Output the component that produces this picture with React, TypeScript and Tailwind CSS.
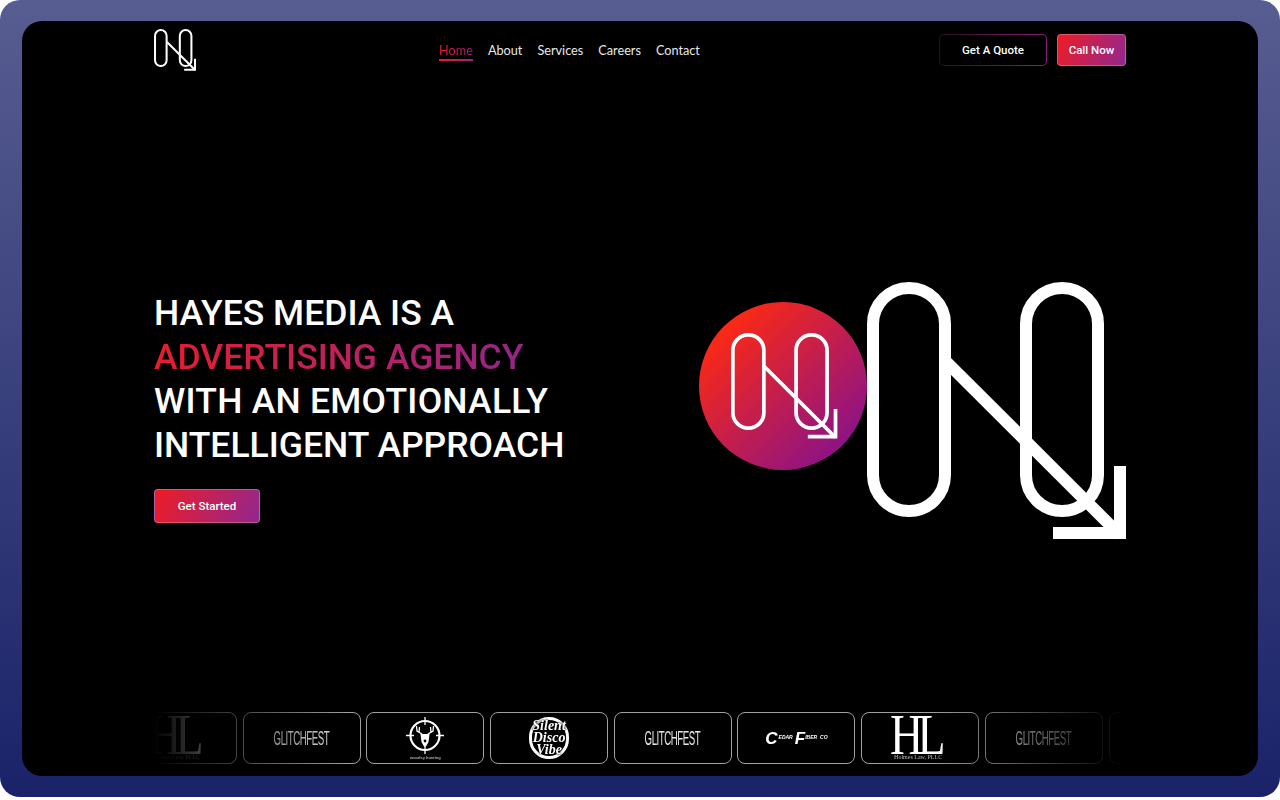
function Logo({ size, stroke, className = '' }: { size: number; stroke: number; className?: string }) {
  const inset = stroke / 2
  return (
    <svg width={size} height={size} viewBox="0 0 259 259" fill="none" stroke="white" strokeWidth={stroke} className={className}>
      <rect x={inset} y={inset} width={84 - stroke} height={235 - stroke} rx={(84 - stroke) / 2} />
      <rect x={153 + inset} y={inset} width={84 - stroke} height={235 - stroke} rx={(84 - stroke) / 2} />
      <path d="M80 80.5 L253 253" />
      <path d="M253 184 V251 H186" />
    </svg>
  )
}

function Glitchfest() {
  return (
    <span className="inline-block scale-x-[0.46] whitespace-nowrap font-['Liberation_Sans'] text-[21px] tracking-[-1px] text-[#e5e5e5]">
      GLITCHFEST
    </span>
  )
}

function Holmes() {
  return (
    <div className="flex flex-col items-center pt-[1px] -translate-x-[2px] text-white font-['Liberation_Serif']">
      <span className="h-[38px] scale-x-[0.82] text-[56px] leading-[38px] tracking-[-7px] pr-[7px]">HL</span>
      <span className="text-[6px] leading-[7px] text-[#bbbbbb]">Holmes Law, PLLC</span>
    </div>
  )
}

function Deer() {
  return (
    <div className="flex flex-col items-center">
      <svg width="38" height="37" viewBox="0 0 38 37" fill="none" stroke="white">
        <circle cx="19" cy="18.5" r="14.5" strokeWidth="2.2" />
        <path d="M19 0V8M19 29V37M0 18.5H8M30 18.5H38" strokeWidth="1.3" />
        <path d="M14.5 17 L23.5 17 L22.5 25 L20 29.5 L18 29.5 L15.5 25 Z" fill="white" stroke="none" />
        <path d="M16 17 L11 14 L10.5 9 M13 15.5 L13.5 10 M22 17 L27 14 L27.5 9 M25 15.5 L24.5 10" strokeWidth="1.3" />
        <circle cx="19" cy="24" r="1.4" fill="black" stroke="none" />
      </svg>
      <span className="mt-[1px] text-[4px] leading-[5px] text-[#aaaaaa] font-['Liberation_Sans'] font-bold">woodsy hunting</span>
    </div>
  )
}

function SilentDisco() {
  return (
    <div className="flex h-[42px] w-[40px] flex-col items-center justify-center rounded-full border-[3px] border-white font-['Liberation_Serif'] text-[14px] font-bold italic leading-[12px] text-white [text-shadow:0_0_2px_#000,0_0_2px_#000]">
      <span>Silent</span>
      <span>Disco</span>
      <span>Vibe</span>
    </div>
  )
}

function Cedar() {
  return (
    <div className="flex items-center italic font-['Liberation_Sans'] font-bold text-white">
      <span className="text-[17px] leading-none mr-[1px]">C</span>
      <span className="text-[5px] mr-[2px]">EDAR</span>
      <span className="text-[17px] leading-none">F</span>
      <span className="text-[5px] mr-[3px]">IBER</span>
      <span className="text-[5px]">CO</span>
    </div>
  )
}

const clients = [Holmes, Glitchfest, Deer, SilentDisco, Glitchfest, Cedar, Holmes, Glitchfest, Deer]

export default function App() {
  return (
    <div className="h-[797px] rounded-[20px] bg-[linear-gradient(180deg,#575d90,#1a2369)] px-[22px] pt-[21px] pb-[21px]">
      <div className="flex h-[755px] flex-col rounded-[20px] bg-black pl-[132px] pr-[132px] pt-2 text-white">
        <header className="flex items-center justify-between">
          <Logo size={42} stroke={12.5} />
          <nav className="mt-[1px] ml-[4px] flex gap-[15px] font-['Lato'] text-[12.7px] leading-[18px] text-[#e8e8e8]">
            <a className="border-b-2 border-transparent bg-[linear-gradient(90deg,#ed1c24,#9e1f82)] bg-clip-text text-transparent [border-image:linear-gradient(90deg,#ed1c24,#9e1f82)_1]">
              Home
            </a>
            <a>About</a>
            <a>Services</a>
            <a>Careers</a>
            <a>Contact</a>
          </nav>
          <div className="flex gap-[10px] font-['Roboto'] text-[11.5px] font-medium">
            <button className="h-8 w-[108px] rounded-[5px] border border-transparent pt-[1px] [background:linear-gradient(#000,#000)_padding-box,linear-gradient(90deg,#2a0f25,#8a1f78)_border-box]">
              Get A Quote
            </button>
            <button className="h-8 w-[69px] rounded-[4px] border border-white/25 bg-[linear-gradient(115deg,#ee1c25,#92278f)] pt-[1px]">
              Call Now
            </button>
          </div>
        </header>

        <section className="mt-[211px] flex items-start justify-between">
          <div className="mt-[9px]">
            <h1 className="font-['Roboto'] text-[35.5px] font-medium leading-[44px]">
              HAYES MEDIA IS A
              <br />
              <span className="bg-[linear-gradient(90deg,#e61e2d,#96258a)] bg-clip-text text-transparent">ADVERTISING AGENCY</span>
              <br />
              <span className="tracking-[0.25px]">WITH AN EMOTIONALLY</span>
              <br />
              INTELLIGENT APPROACH
            </h1>
            <button className="mt-[22px] h-[34px] w-[106px] rounded-[4px] border border-white/25 bg-[linear-gradient(115deg,#ee1c25,#92278f)] pt-[1px] font-['Roboto'] text-[11.5px] font-medium">
              Get Started
            </button>
          </div>
          <div className="flex items-start">
            <div className="mt-5 flex h-[168px] w-[168px] items-center justify-center rounded-full bg-[linear-gradient(135deg,#ff2a10_12%,#8a1288_88%)]">
              <Logo size={107} stroke={9} className="translate-x-[1px]" />
            </div>
            <Logo size={259} stroke={12} />
          </div>
        </section>

        <div className="mt-auto mb-3 overflow-hidden [mask-image:linear-gradient(90deg,transparent,black_20%,black_80%,transparent)]">
          <div className="-ml-[35px] flex gap-[5.7px]">
            {clients.map((Client, i) => (
              <div key={i} className="flex h-[52px] w-[118px] shrink-0 items-center justify-center overflow-hidden rounded-lg border border-[#a0a0a0]">
                <Client />
              </div>
            ))}
          </div>
        </div>
      </div>
    </div>
  )
}
